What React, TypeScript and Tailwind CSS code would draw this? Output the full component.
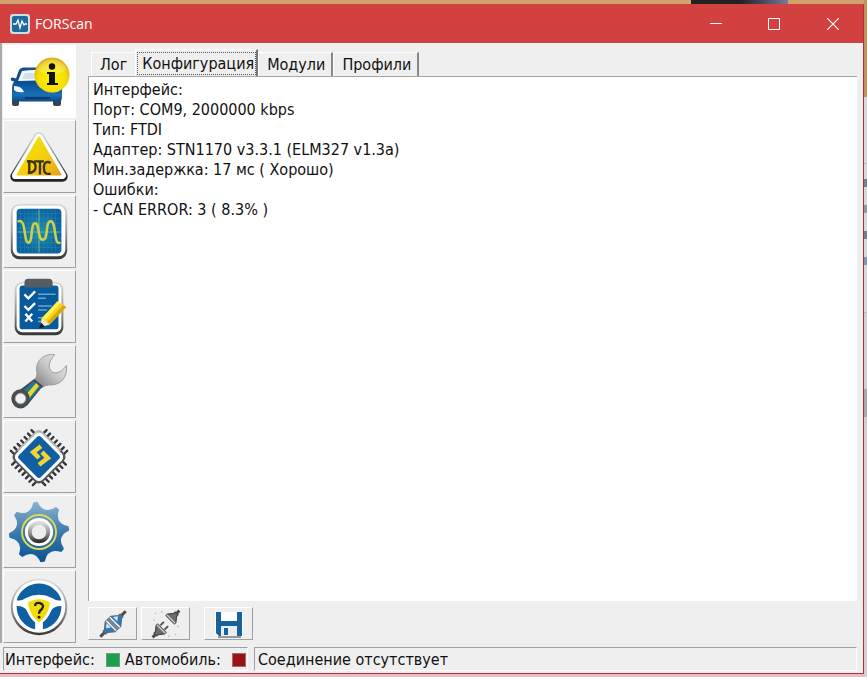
import { useState } from "react";
import type { ReactNode } from "react";

function CarIcon() {
  return (
    <svg viewBox="0 0 73 73" className="size-full" aria-hidden="true">
      <defs>
        <linearGradient id="car" x1="0" y1="0" x2="0" y2="1">
          <stop offset="0" stopColor="#1b4f86" />
          <stop offset=".45" stopColor="#0b4f93" />
          <stop offset=".8" stopColor="#1a70b5" />
          <stop offset="1" stopColor="#0a4a86" />
        </linearGradient>
        <radialGradient id="badge" cx=".5" cy=".6" r=".55">
          <stop offset="0" stopColor="#fff200" />
          <stop offset=".7" stopColor="#f6e000" />
          <stop offset="1" stopColor="#dfb51c" />
        </radialGradient>
      </defs>
      <path d="M9 49h7v10q0 2-2 2h-3q-2 0-2-2zM50 49h8v10q0 2-2 2h-4q-2 0-2-2z" fill="#3b4248" />
      <path d="M16 25q1-2 4-2.500h27q4 0 5 3l5 11q2 3 2 7v8q0 5-3 5H12q-3 0-3-4v-9q0-4 2-7l-3-1q-1-3 2-3l3 1z" fill="url(#car)" />
      <path d="M19 26q13-2 25 0l5 10q-17-1-34 0z" fill="#f3f9fc" />
      <path d="M22 28h18l-2 6H19z" fill="#cfe2ee" />
      <path d="M11 41q8 0 10 6-7 1-10-2zM57 41q-8 0-9 6 6 1 9-2z" fill="#f2f8fb" />
      <path d="M22 53h25" stroke="#083a6b" strokeWidth="2" />
      <circle cx="49" cy="30" r="17.500" fill="url(#badge)" />
      <path d="M34 25a16 16 0 0 1 30 0q-15 8-30 0" fill="#fff" opacity=".22" />
      <circle cx="49" cy="21.500" r="3.200" fill="#111" />
      <path d="M44 27h8v11h3v2H44v-2h2v-9h-2z" fill="#111" />
    </svg>
  );
}

function DtcIcon() {
  return (
    <svg viewBox="0 0 73 73" className="size-full" aria-hidden="true">
      <defs>
        <linearGradient id="triRim" x1="0" y1="0" x2="0" y2="1">
          <stop offset="0" stopColor="#d4d4d4" />
          <stop offset=".5" stopColor="#8f8f8f" />
          <stop offset="1" stopColor="#222" />
        </linearGradient>
        <linearGradient id="triFill" x1="0" y1="0" x2="1" y2="1">
          <stop offset="0" stopColor="#f2e600" />
          <stop offset=".55" stopColor="#f5cf0e" />
          <stop offset="1" stopColor="#e6a31d" />
        </linearGradient>
      </defs>
      <path d="M36 17 60 57H12z" fill="#fff" stroke="url(#triRim)" strokeWidth="11" strokeLinejoin="round" />
      <path d="M36 17 60 56H12z" fill="#fff" stroke="#fff" strokeWidth="7.500" strokeLinejoin="round" />
      <path d="M36 17 58 55H14z" fill="url(#triFill)" stroke="url(#triFill)" strokeWidth="2" strokeLinejoin="round" />
      <g fill="none" stroke="#3a3416" strokeWidth="2.400">
        <path d="M26 41v13M23.500 41.500q9-1 9 5.500t-8 6.500M31 41.500h10M37 42v13M48 43q-7-3-7 5t7 6" />
      </g>
    </svg>
  );
}

function ScopeIcon() {
  return (
    <svg viewBox="0 0 73 73" className="size-full" aria-hidden="true">
      <defs>
        <linearGradient id="rim" x1="0" y1="0" x2="0" y2="1">
          <stop offset="0" stopColor="#dcdcdc" />
          <stop offset=".6" stopColor="#8d8d8d" />
          <stop offset="1" stopColor="#333" />
        </linearGradient>
        <radialGradient id="screen">
          <stop offset="0" stopColor="#1f8fae" />
          <stop offset="1" stopColor="#0a64a0" />
        </radialGradient>
      </defs>
      <rect x="7" y="8" width="58" height="57" rx="9" fill="url(#rim)" />
      <rect x="9" y="10" width="54" height="52" rx="7" fill="#fff" />
      <rect x="13" y="13" width="46" height="46" rx="4" fill="url(#screen)" />
      <path d="M17 13v46M21 13v46M25 13v46M29 13v46M33 13v46M41 13v46M45 13v46M49 13v46M53 13v46M13 18h46M13 23h46M13 28h46M13 33h46M13 43h46M13 48h46M13 53h46" stroke="#4d9fb5" strokeWidth=".5" strokeDasharray="1 1" />
      <path d="M36 14v44M14 37h44" stroke="#6fb08a" strokeWidth="1.200" />
      <path d="M15 26c8-3 5 22 10 22s2-20 7-20 2 17 8 17 2-19 8-19 3 24 9 22" fill="none" stroke="#cfcf48" strokeWidth="2.600" strokeLinecap="round" />
    </svg>
  );
}

function ChecklistIcon() {
  return (
    <svg viewBox="0 0 73 73" className="size-full" aria-hidden="true">
      <rect x="11" y="11" width="50" height="55" rx="8" fill="url(#rim)" />
      <rect x="13" y="13" width="46" height="50" rx="6" fill="#fff" />
      <rect x="16" y="15" width="40" height="45" rx="3" fill="#075a9b" />
      <path d="M21 17v-5q0-4 4-4h21q4 0 4 4v5z" fill="#555c62" />
      <path d="M35 24h18M35 28h8M35 36h14M35 40h9M35 48h7M35 52h4" stroke="#66a5cf" strokeWidth="1.500" />
      <g fill="none" stroke="#fff" strokeWidth="2.400">
        <path d="m21 24 4 4 7-7M21 36l4 4 7-7M22 44l7 8M29 44l-7 8" />
      </g>
      <path d="m37 58 2-10 16-17 9 6-16 17z" fill="#f4d914" />
      <path d="m40 48 15-17 3 2-15 17z" fill="#fff05a" />
      <path d="m47 55 17-18-3-2-17 18z" fill="#d9a70e" />
      <path d="m37 58 2-10 8 7z" fill="#efe8cf" />
      <path d="m36 59 2-6 4 4z" fill="#111" />
    </svg>
  );
}

function WrenchIcon() {
  return (
    <svg viewBox="0 0 73 73" className="size-full" aria-hidden="true">
      <defs>
        <linearGradient id="steel" x1="1" y1="0" x2="0" y2="1">
          <stop offset="0" stopColor="#f1f1f1" />
          <stop offset=".5" stopColor="#c6c6c6" />
          <stop offset="1" stopColor="#777" />
        </linearGradient>
      </defs>
      <path d="M52 9C40 7 31 17 34 28q0 4-3 7l8 8q4-3 7-3c13 1 20-9 18-20-4 6-9 9-14 7-6-4-4-11 2-18z" fill="url(#steel)" stroke="#999" />
      <path d="m31 34 9 7-16 20q-6 6-13 1-5-6 0-13z" fill="#454a4e" />
      <path d="m30 36 8 6-14 17-9-9z" fill="#23739a" />
      <path d="m33 38 3 3-12 15-4-3z" fill="#e4dc25" />
      <circle cx="17" cy="54" r="9.500" fill="#484d51" />
      <circle cx="17" cy="54" r="5.400" fill="#f2f2f2" stroke="#aaa" />
    </svg>
  );
}

function ChipIcon() {
  const pins = [-14, -9, -4, 1, 6, 11, 16];
  return (
    <svg viewBox="0 0 73 73" className="size-full" aria-hidden="true">
      <g transform="translate(36 37) rotate(45)">
        {pins.map((p) => (
          <path key={p} d={`M${p}-25v50M-25 ${p}h50`} stroke="#30363b" strokeWidth="2.400" strokeLinecap="round" />
        ))}
        <rect x="-21" y="-21" width="42" height="42" rx="6" fill="#55585b" />
        <path d="M-21 12v-27q0-6 6-6H12L-21 12z" fill="#b9bbbd" />
        <rect x="-19" y="-19" width="38" height="38" rx="5" fill="#fff" />
        <rect x="-16" y="-16" width="32" height="32" rx="3" fill="#0f5fa2" />
      </g>
      <path d="m38 26-8 6 6 6M39 32l6 6-9 7" fill="none" stroke="#f3d432" strokeWidth="4.600" />
    </svg>
  );
}

function gearOutline(cx: number, cy: number, teeth: number) {
  const at = (deg: number, r: number) => {
    const a = (deg * Math.PI) / 180;
    return `${(cx + r * Math.cos(a)).toFixed(1)} ${(cy + r * Math.sin(a)).toFixed(1)}`;
  };
  const step = 360 / teeth;
  let d = "";
  for (let i = 0; i < teeth; i++) {
    const a = -97 + i * step;
    d += `${i === 0 ? "M" : "L"}${at(a - 4, 31)}L${at(a + 4, 31)}Q${at(a + step / 2, 18)} ${at(a + step - 4, 31)}`;
  }
  return d + "z";
}

function GearIcon() {
  return (
    <svg viewBox="0 0 73 73" className="size-full" aria-hidden="true">
      <defs>
        <linearGradient id="gear" x1="0" y1="0" x2="0" y2="1">
          <stop offset="0" stopColor="#8fb3d0" />
          <stop offset=".5" stopColor="#3a7ab0" />
          <stop offset="1" stopColor="#0a5193" />
        </linearGradient>
      </defs>
      <path d={gearOutline(36, 37, 8)} fill="url(#gear)" />
      <circle cx="36" cy="37" r="17.500" fill="none" stroke="#dcd850" strokeWidth="2" />
      <circle cx="36" cy="37" r="14.500" fill="#fff" />
      <circle cx="36" cy="37" r="9.500" fill="#eee" stroke="url(#rim)" strokeWidth="4" />
    </svg>
  );
}

function WheelIcon() {
  return (
    <svg viewBox="0 0 73 73" className="size-full" aria-hidden="true">
      <circle cx="36" cy="37" r="29" fill="url(#rim)" />
      <circle cx="36" cy="36.500" r="27" fill="#fff" />
      <g fill="#0f60a2">
        <path d="M13 30A24 24 0 0 1 59 30Q54 31 50 28 36 21 22 28 18 31 13 30z" />
        <path d="M13 36q9 0 11 6 3 7 8 11v7A24 24 0 0 1 13 36z" />
        <path d="M59 36q-9 0-11 6-3 7-8 11v7A24 24 0 0 0 59 36z" />
      </g>
      <path d="M27 31q9-4 18 0 3 1 2 4-2 11-11 18-9-7-11-18-1-3 2-4z" fill="#f2dc0a" />
      <path d="M32 36q0-4 5-3 5 2 2 6-3 2-3 5" fill="none" stroke="#222" strokeWidth="2.400" />
      <circle cx="36" cy="47.500" r="1.500" fill="#222" />
    </svg>
  );
}

function ConnectIcon() {
  return (
    <svg viewBox="0 0 32 32" className="size-8" aria-hidden="true">
      <g transform="translate(16 16) rotate(-45)">
        <path d="M-18 0h8M10 0h8" stroke="#4d4d4d" strokeWidth="3" />
        <path d="M-12-2h2l6-5h8l6 5h2v4h-2L4 7h-8l-6-5h-2z" fill="#2f79b5" stroke="#5c6872" strokeWidth="1.200" />
        <path d="M-8-2l4-3v6zM5-5l4 3-4 3z" fill="#d6e8f4" />
        <path d="M-2.500-7v14M2.500-7v14" stroke="#eee" strokeWidth="1.600" />
        <path d="M0-7v14" stroke="#888" strokeWidth="2" />
      </g>
    </svg>
  );
}

function DisconnectIcon() {
  return (
    <svg viewBox="0 0 32 32" className="size-8" aria-hidden="true">
      <g transform="translate(16 16) rotate(-45)">
        <path d="M-19 0h6M13 0h6" stroke="#4d4d4d" strokeWidth="3" />
        <path d="M-15-2h2l5-4h2V6h-2l-5-4h-2zM15-2h-2L8-6H6V6h2l5-4h2z" fill="#6c6c6c" stroke="#484848" strokeWidth="1.200" />
        <path d="M-7-6V6M7-6V6" stroke="#ccc" strokeWidth="1.400" />
        <path d="M-5-3h5M-5 3h5" stroke="#555" strokeWidth="2" />
      </g>
      <path d="m5 5 1 1M12 3v2M3 12h2M29 19l-2-1M26 27l-1-1M19 29v-2" stroke="#bbb" strokeWidth="1.200" />
    </svg>
  );
}

function SaveIcon() {
  return (
    <svg viewBox="0 0 32 32" className="size-8" aria-hidden="true">
      <path d="M2 4h28v25H6l-4-4z" fill="#fff" />
      <path d="M3 4h5v9h16V4h5v24H6l-3-3z" fill="#17629d" />
      <path d="M8 18h16v10H8z" fill="#e9edf0" />
      <path d="M11 20h4v7h-4z" fill="#17629d" />
      <path d="M5 29h23" stroke="#303b45" />
    </svg>
  );
}

const sections: { label: string; icon: ReactNode }[] = [
  { label: "Автомобиль", icon: <CarIcon /> },
  { label: "DTC", icon: <DtcIcon /> },
  { label: "Осциллограф", icon: <ScopeIcon /> },
  { label: "Тесты", icon: <ChecklistIcon /> },
  { label: "Сервис", icon: <WrenchIcon /> },
  { label: "Программирование", icon: <ChipIcon /> },
  { label: "Настройки", icon: <GearIcon /> },
  { label: "Справка", icon: <WheelIcon /> },
];

const tabs = ["Лог", "Конфигурация", "Модули", "Профили"];

const report = [
  "Интерфейс:",
  "Порт: COM9, 2000000 kbps",
  "Тип: FTDI",
  "Адаптер: STN1170 v3.3.1 (ELM327 v1.3a)",
  "Мин.задержка: 17 мс ( Хорошо)",
  "Ошибки:",
  "- CAN ERROR: 3 ( 8.3% )",
];

function TitleBar() {
  return (
    <header className="flex h-[39px] shrink-0 items-center bg-[#d2413f] text-white">
      <svg viewBox="0 0 20 20" className="ml-[10px] size-5" aria-hidden="true">
        <rect width="20" height="20" rx="3" fill="#cfdde6" />
        <rect x="2" y="2" width="16" height="16" rx="2" fill="#1d6a9b" />
        <path d="M3 10h3l2-4 2 8 2-7 2 4 1-1h2" fill="none" stroke="#fff" strokeWidth="1.300" />
      </svg>
      <h1 className="ml-[5px] flex-1 font-['Open_Sans','Noto_Sans',sans-serif] text-[14px]">FORScan</h1>
      <button aria-label="Свернуть" className="flex h-full w-[58px] items-center justify-center">
        <svg viewBox="0 0 12 12" className="size-3" aria-hidden="true"><path d="M0 5.500h12" stroke="#fff" /></svg>
      </button>
      <button aria-label="Развернуть" className="flex h-full w-[58px] items-center justify-center">
        <svg viewBox="0 0 12 12" className="size-3" aria-hidden="true"><path d="M.5.5h11v11H.5z" fill="none" stroke="#fff" /></svg>
      </button>
      <button aria-label="Закрыть" className="flex h-full w-[60px] items-center justify-center">
        <svg viewBox="0 0 12 12" className="size-3" aria-hidden="true"><path d="m0 0 12 12M12 0 0 12" stroke="#fff" strokeWidth="1.200" /></svg>
      </button>
    </header>
  );
}

function ToolButton({ label, children }: { label: string; children: ReactNode }) {
  return (
    <button aria-label={label} className="flex h-[33px] w-[49px] items-center justify-center border-t border-r border-b border-l border-t-white border-r-[#a0a0a0] border-b-[#a0a0a0] border-l-white">
      {children}
    </button>
  );
}

export default function App() {
  const [section, setSection] = useState(0);
  const [tab, setTab] = useState(1);
  return (
    <div className="flex min-h-screen bg-[#d8c8ca] font-['DejaVu_Sans_Condensed','Noto_Sans',sans-serif] text-[16px] text-[#111]">
      <div className="flex min-w-0 flex-1 flex-col">
        <div className="flex h-1 shrink-0 bg-[#d0a36e]">
          <div className="ml-[80%] h-full w-[97px] bg-gradient-to-r from-[#222] via-[#222] to-[#77799b]" />
        </div>
        <main className="flex flex-1 flex-col border-r border-b border-[#b52d3b] bg-[#efefef]">
          <TitleBar />
          <div className="flex flex-1">
            <nav className="flex w-[76px] shrink-0 flex-col gap-[2px] border-l-2 border-[#a9a9a9] pt-[2px] pl-[1px]">
              {sections.map((s, i) => (
                <button
                  key={s.label}
                  aria-label={s.label}
                  aria-pressed={i === section}
                  onClick={() => setSection(i)}
                  className={
                    i === section
                      ? "h-[73px] w-[73px] bg-white"
                      : "h-[73px] w-[73px] border-t border-r border-b border-l border-t-white border-r-[#a0a0a0] border-b-[#a0a0a0] border-l-white"
                  }
                >
                  {s.icon}
                </button>
              ))}
            </nav>
            <section className="flex min-w-0 flex-1 flex-col pr-[6px] pl-[12px]">
              <div role="tablist" className="flex h-[33px] items-end pl-[3px]">
                {tabs.map((t, i) => (
                  <button
                    key={t}
                    role="tab"
                    aria-selected={i === tab}
                    onClick={() => setTab(i)}
                    className={
                      i === tab
                        ? "flex h-[27px] border-t border-r-2 border-l border-t-white border-r-[#777] border-l-white pt-[2px] pb-[1px] pl-[1px]"
                        : "h-[24px] border-t border-r-2 border-l border-t-white border-r-[#888] border-l-white pt-[1px] pr-[6px] pl-[8px] leading-[22px] first:border-r-0 first:pr-[8px]"
                    }
                  >
                    {i === tab ? <span className="border border-dotted border-[#555] pr-[1px] pl-[4px] leading-[21px]">{t}</span> : t}
                  </button>
                ))}
              </div>
              <div role="tabpanel" className="flex-1 border-t border-l border-[#a6a6a6] bg-white pt-[3px] pl-[4px] leading-5">
                {report.map((line) => (
                  <p key={line}>{line}</p>
                ))}
              </div>
              <div className="flex h-[42px] items-start pt-[6px]">
                <ToolButton label="Подключить"><ConnectIcon /></ToolButton>
                <div className="ml-1 flex gap-[14px]">
                  <ToolButton label="Отключить"><DisconnectIcon /></ToolButton>
                  <ToolButton label="Сохранить"><SaveIcon /></ToolButton>
                </div>
              </div>
            </section>
          </div>
          <footer className="flex h-[30px] shrink-0 items-center gap-[6px] pt-[2px] pr-[6px] pl-[3px] whitespace-nowrap">
            <div className="flex h-6 w-[245px] items-center border-t border-r border-b border-l border-t-[#a0a0a0] border-r-white border-b-white border-l-[#a0a0a0] pt-[2px] pl-[1px]">
              <span>Интерфейс:</span>
              <span className="ml-[11px] size-[14px] border border-[#7d9485] bg-[#18a249]" />
              <span className="ml-[5px]">Автомобиль:</span>
              <span className="ml-[11px] size-[14px] border border-[#8f7474] bg-[#9e1014]" />
            </div>
            <div role="status" className="flex h-6 flex-1 items-center border-t border-r border-b border-l border-t-[#a0a0a0] border-r-white border-b-white border-l-[#a0a0a0] pt-[2px] pl-[3px]">
              Соединение отсутствует
            </div>
          </footer>
        </main>
        <div className="h-[3px] shrink-0 bg-[#e3bfc5]" />
      </div>
      <div className="flex w-[3px] shrink-0 flex-col">
        <div className="h-[97px] bg-[#bd935e]" />
        <div className="h-[66px] bg-[#d9d9dc]" />
        <div className="flex h-[150px] flex-col gap-[18px] border-t border-b border-[#b9b9bd] bg-[#d9d9dc] pt-[15px]">
          <div className="h-2 bg-[#777f92]" />
          <div className="h-2 bg-[#8f9ba0]" />
          <div className="h-2 bg-[#777f92]" />
          <div className="h-2 bg-[#8395b5]" />
        </div>
        <div className="h-[76px] bg-[#d3d0d3]" />
        <div className="h-7 bg-[#aaa8ab]" />
        <div className="flex-1 bg-[#d8cdd0]" />
      </div>
    </div>
  );
}
